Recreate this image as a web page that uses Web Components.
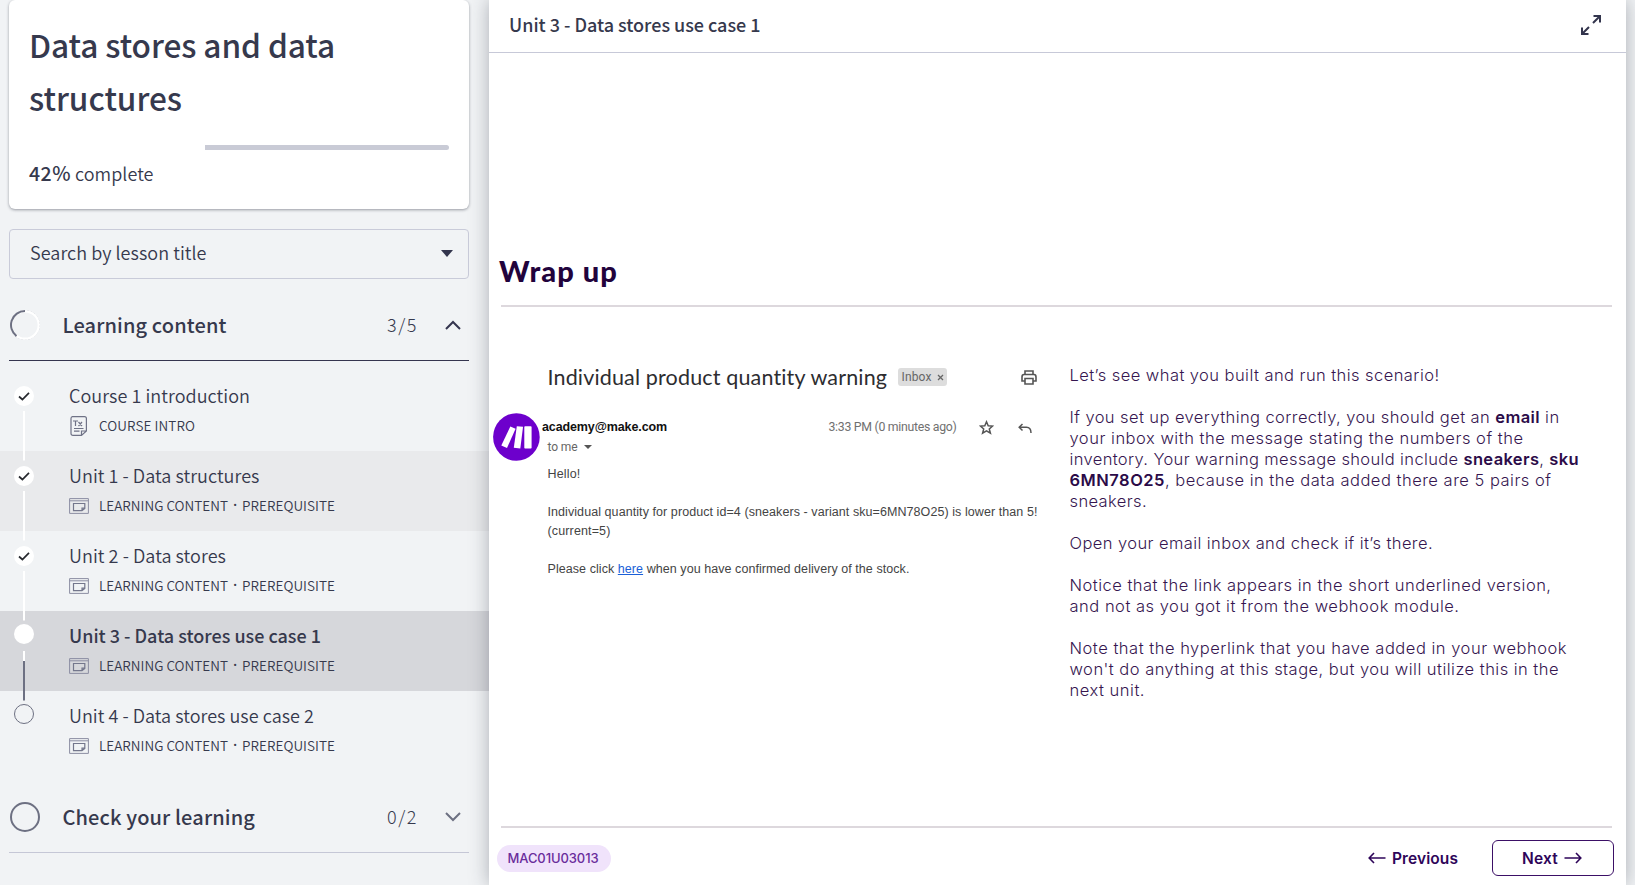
<!DOCTYPE html>
<html lang="en"><head><meta charset="utf-8"><title>Data stores and data structures</title>
<style>
body{margin:0;height:885px;overflow:hidden;background:#f1f3f5;font-family:"Noto Sans CJK SC",sans-serif;color:#36394d}
</style></head><body><course-player></course-player>
<script>
const define=(name,html,init)=>customElements.define(name,class extends HTMLElement{
  connectedCallback(){
    if(this.shadowRoot)return;
    const r=this.attachShadow({mode:'open'});
    r.innerHTML=typeof html==='function'?html(this):html;
    if(init)init(this,r);
  }
});

/* A single line of text, tracked so that it fills the width given in "w". */
define('fit-text','<style>:host{display:block;white-space:nowrap;flex:none}span{display:inline-block}</style><span><slot></slot></span>',(el,r)=>{
  const w=+el.getAttribute('w'), n=el.textContent.length, s=r.querySelector('span');
  el.style.width=w+'px';
  s.style.letterSpacing='0px';
  s.style.letterSpacing=((w-s.getBoundingClientRect().width)/n).toFixed(4)+'px';
});

define('progress-card',`<style>
:host{display:block;box-sizing:border-box;height:209px;margin:0 0 0 9px;width:460px;padding:18px 20px 0;background:#fff;border-radius:6px;box-shadow:0 1px 3px rgba(40,45,60,.45)}
.t{font-size:31.6px;font-weight:500;line-height:53.3px}
.bar{margin-top:20px;height:5px;border-radius:3px;background:linear-gradient(90deg,#fff 176px,#c9cbd6 176px)}
.p{display:flex;align-items:baseline;gap:4px;line-height:30px;margin-top:8px;font-size:18px;font-weight:350}
b{font-weight:500;font-size:19.5px}
</style>
<div class="t"><fit-text w="306">Data stores and data</fit-text><fit-text w="153">structures</fit-text></div>
<div class="bar"></div><div class="p"><b><fit-text w="42">42%</fit-text></b><fit-text w="78.5">complete</fit-text></div>`);

define('lesson-search',`<style>
:host{display:flex;box-sizing:border-box;margin:20px 0 0 9px;width:460px;height:50px;border:1px solid #c9cbd9;border-radius:4px;padding:0 15px 1px 20px;align-items:center;justify-content:space-between;font-size:18px;font-weight:350}
fit-text{margin-bottom:3px}
</style><fit-text w="176.5">Search by lesson title</fit-text><svg width="12" height="7"><path d="M0 0H12L6 7Z" fill="#33354d"/></svg>`);

define('section-head',el=>`<style>
:host{display:flex;box-sizing:border-box;align-items:center;margin-left:9px;width:460px;height:71px;border-bottom:1px solid ${el.hasAttribute('open')?'#35354f':'#c5c7d6'}}
svg{flex:none}.ring{margin:0 22.5px 0 1px}.n{font-size:20px;font-weight:500;line-height:30px;flex:1}.c{font-size:18px;font-weight:300;margin:0 27px 2px 0}
</style><svg class="ring" width="30" height="30" fill="none">${el.hasAttribute('open')
?'<circle cx="15" cy="15" r="14.5" stroke="#c9cbd3" stroke-dasharray="2 1.5"/><circle cx="15" cy="15" r="13.7" stroke="#fff" stroke-width="2.2"/><path d="M15 1A14 14 0 0 0 6.5 26.1" stroke="#6d7082" stroke-width="2"/>'
:'<circle cx="15" cy="15" r="14" stroke="#6d7082" stroke-width="2"/>'}</svg>
<div class="n"><fit-text w="${el.getAttribute('w')}">${el.getAttribute('name')}</fit-text></div><div class="c"><fit-text w="31">${el.getAttribute('count')}</fit-text></div>
<svg width="16" height="10" style="margin-right:8px" fill="none" stroke="${el.hasAttribute('open')?'#35354f':'#6d7082'}" stroke-width="2"><path d="${el.hasAttribute('open')?'M1 9L8 2L15 9':'M1 1L8 8L15 1'}"/></svg>`);

define('lesson-row',el=>{
const st=el.getAttribute('state'),intro=el.hasAttribute('intro'),cy=st==='done'?25:23;
const circle=st==='todo'?`<circle cx="24" cy="${cy}" r="9.5" fill="none" stroke="#6d7082"/>`:`<circle cx="24" cy="${cy}" r="10" fill="#fff"/>`;
const check=st==='done'?'<path d="M19 25.5l3.4 3L29 21.8" fill="none" stroke="#26282e" stroke-width="1.7"/>':'';
const w='stroke="#fff" stroke-width="2"';
const top=intro?'':`<path d="M24 0V9.5" ${st==='todo'?'stroke="#6d7082" stroke-width="2"':w}/>`;
const bottom=st==='todo'?'':st==='now'?`<path d="M24 40V50" ${w}/><path d="M24 50V80" stroke="#6d7082" stroke-width="2"/>`:`<path d="M24 40V80" ${w}/>`;
const icon=intro?`<svg width="20" height="20" fill="none" stroke="#6f7286" stroke-width="1.2"><path d="M3 .6H15.5Q17.4.6 17.4 2.5V15L12.5 19.4H4Q2 19.4 2 17.4V2.5Q2 .6 3.5 .6ZM12.5 19V15H17.2M5 12.5H14.5M5 15.2H10.5"/><path d="M4 5H9M6.5 5V10M9.5 6L13 10M13 6L9.5 10"/></svg>`
:`<svg width="20" height="16" fill="none" stroke="#8c8ea3"><path d="M.6.6H19.4V15.4H.6ZM.6 2.8H19.4"/><path d="M4.5 5.5H15.8V10.4L13 12.7H4.5ZM13 12.5V10.2H15.8" stroke="#74778c" stroke-width="1.2"/></svg>`;
return `<style>
:host{display:flex;height:80px;width:489px;background:${st==='now'?'#d6d7db':el.hasAttribute('shade')?'#e9eaec':'none'}}
.rail{flex:none;width:69px}.b{padding-top:11px}.t{font-size:18px;line-height:26px;font-weight:${st==='now'?500:350}}
.m{display:flex;align-items:center;height:20px;margin-top:7px;font-size:13.5px;font-weight:350;line-height:20px}.i{width:30px;height:20px;display:flex;align-items:center;padding-top:1px}
.d{width:14px;text-align:center;font-family:"Noto Sans",sans-serif;font-weight:600}
</style><svg class="rail" width="69" height="80">${top}${circle}${check}${bottom}</svg>
<div class="b"><div class="t"><fit-text w="${el.getAttribute('w')}">${el.getAttribute('name')}</fit-text></div>
<div class="m"><span class="i">${icon}</span>${intro?'<fit-text w="96">COURSE INTRO</fit-text>':'<fit-text w="129">LEARNING CONTENT</fit-text><span class="d">·</span><fit-text w="93">PREREQUISITE</fit-text>'}</div></div>`});

define('course-sidebar',`<style>:host{display:block;width:489px;flex:none}.l{height:11px}.f{height:10px}.g{height:11px}</style>
<progress-card></progress-card><lesson-search></lesson-search><div class="l"></div>
<section-head open name="Learning content" w="164" count="3/5"></section-head>
<div class="f"></div>
<lesson-row intro state="done" name="Course 1 introduction" w="181"></lesson-row>
<lesson-row shade state="done" name="Unit 1 - Data structures" w="190.5"></lesson-row>
<lesson-row state="done" name="Unit 2 - Data stores" w="157"></lesson-row>
<lesson-row state="now" name="Unit 3 - Data stores use case 1" w="252"></lesson-row>
<lesson-row state="todo" name="Unit 4 - Data stores use case 2" w="245"></lesson-row>
<div class="g"></div><section-head name="Check your learning" w="192.5" count="0/2"></section-head>`);

define('unit-header',`<style>
:host{display:flex;flex:none;box-sizing:border-box;height:53px;border-bottom:1px solid #c7c9d8;align-items:center;justify-content:space-between;padding:0 25px 2px 20px;font-size:18px;font-weight:500}
fit-text{margin-bottom:2px}
</style><fit-text w="251.5">Unit 3 - Data stores use case 1</fit-text>
<svg width="20" height="20" fill="none" stroke="#33354d" stroke-width="2"><path d="M12 8L18.5 1.5M12.5 1H19V7.5M8 12L1.5 18.5M1 12.5V19H7.5"/></svg>`);

define('mail-shot',`<style>
:host{display:block;width:548px;color:#444;font:12.5px "Liberation Sans",sans-serif}
.s{display:flex;align-items:center;height:24px;padding-left:58.5px;font:21.5px Lato,sans-serif;color:#2d2d30}
.s>fit-text{margin-bottom:1px}
.tag{display:flex;box-sizing:border-box;align-items:center;gap:5px;margin-left:10px;width:49px;height:18px;padding-left:4px;border-radius:3px;background:#ddd;color:#666;font:12px Roboto,sans-serif}
.pr{margin-left:74px}
.h{display:flex;margin-top:23px;height:52px}.av{margin:1px 2.5px 0 3.5px;flex:none}.who{width:286.5px}
.who b{display:block;color:#111;line-height:18px;margin-top:6px}
.me{display:flex;align-items:center;gap:6px;margin:3px 0 0 5.5px;line-height:16px;color:#666;font-size:12px;font-family:Roboto,sans-serif}
.tm{padding-top:6px;line-height:18px;font:12.3px/18px Roboto,sans-serif;color:#707070}
.st{margin:8px 24px 0 22px}.rp{margin-top:11px}
.x{padding-left:58.5px;line-height:19px;padding-top:.5px}.x p{margin:0;height:19px}.x p:nth-child(2),.x p:nth-child(4){margin-top:19px}
u{color:#1a5fd8}
</style>
<div class="s"><fit-text w="340">Individual product quantity warning</fit-text><span class="tag"><fit-text w="30">Inbox</fit-text><svg width="7" height="7" stroke="#666" stroke-width="1.3"><path d="M1 1L6 6M6 1L1 6"/></svg></span>
<svg class="pr" width="16" height="15" fill="none" stroke="#555" stroke-width="1.6"><path d="M4 4V1H12V4M4 11H1V7Q1 4.5 3 4.5H13Q15 4.5 15 7V11H12M4 8.5H12V14H4Z"/></svg></div>
<div class="h"><svg class="av" width="47" height="48"><ellipse cx="23.4" cy="24" rx="23.3" ry="23.8" fill="#6d00cc"/><g fill="#fff"><path d="M17.3 13.6L22.6 15.8L14 35L8.3 32.6Z"/><path d="M23.8 13.2L30 13.8L27.3 35.5L20.8 34.7Z"/><rect x="31.3" y="13.3" width="7.3" height="22.2" rx=".8"/></g></svg>
<div class="who"><b><fit-text w="125">academy@make.com</fit-text></b><div class="me"><fit-text w="30">to me</fit-text><svg width="8" height="4"><path d="M0 0H8L4 4Z" fill="#555"/></svg></div></div>
<div class="tm"><fit-text w="128">3:33 PM (0 minutes ago)</fit-text></div>
<svg class="st" width="15" height="15" fill="none" stroke="#555" stroke-width="1.5"><path d="M7.5 1.8L9.2 5.8L13.6 6.1L10.3 9L11.4 13.2L7.5 10.9L3.6 13.2L4.7 9L1.4 6.1L5.8 5.8Z"/></svg>
<svg class="rp" width="14" height="11" fill="none" stroke="#555" stroke-width="1.5"><path d="M4.5 1L1.2 4.2L4.5 7.5M1.2 4.2H8.5Q13 4.2 13 10"/></svg></div>
<div class="x"><p><fit-text w="33">Hello!</fit-text></p><p><fit-text w="490">Individual quantity for product id=4 (sneakers - variant sku=6MN78O25) is lower than 5!</fit-text></p><p><fit-text w="63">(current=5)</fit-text></p><p><fit-text w="362">Please click <u>here</u> when you have confirmed delivery of the stock.</fit-text></p></div>`);

define('lesson-copy',`<style>
:host{display:block;font:300 16.5px/21.03px Inter,sans-serif;color:#361650}
b{font-weight:600;color:#2b0b48}p{margin:0 0 21.03px}
</style>
<p><fit-text w="370">Let’s see what you built and run this scenario!</fit-text></p>
<p><fit-text w="490">If you set up everything correctly, you should get an <b>email</b> in</fit-text>
<fit-text w="454">your inbox with the message stating the numbers of the</fit-text>
<fit-text w="509.5">inventory. Your warning message should include <b>sneakers</b>, <b>sku</b></fit-text>
<fit-text w="482"><b>6MN78O25</b>, because in the data added there are 5 pairs of</fit-text>
<fit-text w="77.5">sneakers.</fit-text></p>
<p><fit-text w="363.5">Open your email inbox and check if it’s there.</fit-text></p>
<p><fit-text w="482">Notice that the link appears in the short underlined version,</fit-text>
<fit-text w="390">and not as you got it from the webhook module.</fit-text></p>
<p><fit-text w="497.5">Note that the hyperlink that you have added in your webhook</fit-text>
<fit-text w="489.5">won't do anything at this stage, but you will utilize this in the</fit-text>
<fit-text w="75.5">next unit.</fit-text></p>`);

define('unit-footer',`<style>
:host{display:flex;flex:none;box-sizing:border-box;align-items:center;height:58px;padding:2px 12px 0 8px;font:600 15.5px Inter,sans-serif;color:#2e0559}
.id{box-sizing:border-box;padding:5px 0 0 10.5px;width:114px;height:27px;border-radius:14px;background:#f0e3fb;color:#6a2d9c;font:500 13px/17px Inter,sans-serif;margin-right:auto}
.a{display:flex;align-items:center;gap:6px}
.n{box-sizing:border-box;margin-left:34px;width:122px;height:36px;border:1.4px solid #3b0f66;border-radius:6px;justify-content:center;padding-right:2px}
svg{fill:none;stroke:#2e0559;stroke-width:1.6}
</style><div class="id"><fit-text w="91">MAC01U03013</fit-text></div>
<div class="a"><svg width="18" height="12"><path d="M17.5 6H1.2M6 1L1.2 6L6 11"/></svg><fit-text w="66">Previous</fit-text></div>
<div class="a n"><fit-text w="36">Next</fit-text><svg width="18" height="12"><path d="M.5 6H16.8M12 1L16.8 6L12 11"/></svg></div>`);

define('unit-panel',`<style>
:host{display:flex;flex-direction:column;width:1137px;height:885px;background:#fff;box-shadow:0 0 18px rgba(40,45,60,.35);flex:none}
h1{margin:194px 0 0 10px;font:900 29px/48px Lato,sans-serif;color:#22033c}
.r{height:2px;flex:none;background:#ddd8dd;margin:10px 14px 0 12px}
.c{display:flex;height:519px;flex:none}.mail{padding-top:58px}.txt{padding:58px 0 0 32.5px}
.r2{margin-top:0}
</style><unit-header></unit-header><h1><fit-text w="119">Wrap up</fit-text></h1><div class="r"></div>
<div class="c"><mail-shot class="mail"></mail-shot><lesson-copy class="txt"></lesson-copy></div>
<div class="r r2"></div><unit-footer></unit-footer>`);

define('course-player',`<style>:host{display:flex;height:885px}</style><course-sidebar></course-sidebar><unit-panel></unit-panel>`);
</script></body></html>
